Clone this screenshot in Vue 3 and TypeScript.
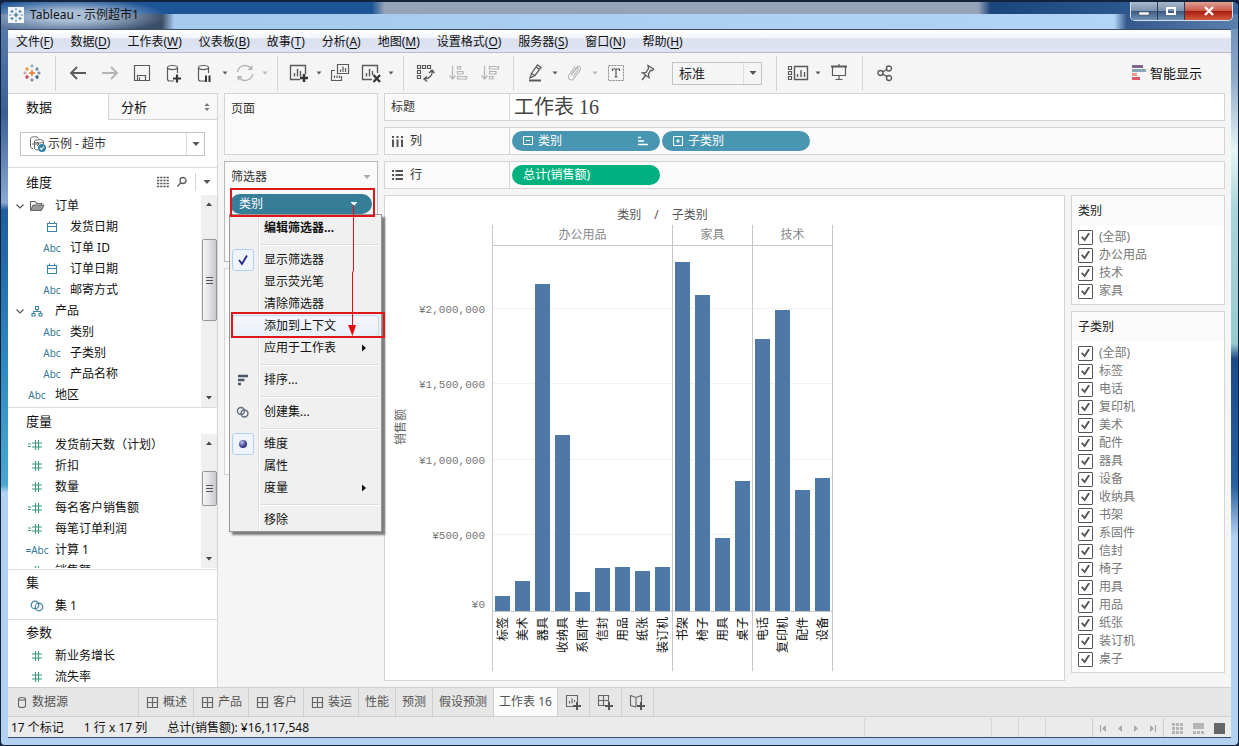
<script setup lang="ts">
import { h, type FunctionalComponent } from 'vue'

interface Shape { d: string; f?: string; s?: string; w?: number; dash?: string }
interface IconDef { w: number; h: number; p: Shape[] }

const G = '#5a5a5a'
const L = '#b4b4b4'
const B = '#3f83a3'
const N = '#3c9b80'
const plus = (x: number, y: number, r: number) => `M${x - r} ${y}H${x + r}M${x} ${y - r}V${y + r}`
const circle = (x: number, y: number, r: number) => `M${x - r} ${y}a${r} ${r} 0 1 0 ${2 * r} 0a${r} ${r} 0 1 0 ${-2 * r} 0Z`
const cylinder = 'M10 18H5.500Q3.500 18 3.500 16V4.500M3.500 4.500C3.500 1.800 13.500 1.800 13.500 4.500C13.500 7.200 3.500 7.200 3.500 4.500M13.500 4.500V10'
const squares = (pts: number[][], s: number) => pts.map(([x, y]) => `M${x} ${y}h${s}v${s}h${-s}Z`).join('')

const icons: Record<string, IconDef> = {
  logo: { w: 18, h: 18, p: [
    { d: plus(9, 9, 3), s: '#e8762d', w: 1.6 },
    { d: plus(4, 5, 2), s: '#eb9129', w: 1.2 }, { d: plus(14, 5, 2), s: '#59879b', w: 1.2 },
    { d: plus(4, 13, 2), s: '#c72037', w: 1.2 }, { d: plus(14, 13, 2), s: '#1f457e', w: 1.2 },
    { d: plus(9, 2, 1.6), s: '#7199a6', w: 1 }, { d: plus(9, 16, 1.6), s: '#5c6692', w: 1 },
    { d: plus(2, 9, 1.6), s: '#c08aa0', w: 1 }, { d: plus(16, 9, 1.6), s: '#5c6692', w: 1 } ] },
  logoBlue: { w: 16, h: 16, p: [
    { d: plus(8, 8, 2.4), s: '#2f6590', w: 1.1 },
    { d: plus(4, 4.5, 1.5) + plus(12, 4.5, 1.5) + plus(4, 11.5, 1.5) + plus(12, 11.5, 1.5), s: '#3b719a', w: 0.9 },
    { d: plus(8, 2.2, 1.1) + plus(8, 13.8, 1.1) + plus(2.2, 8, 1.1) + plus(13.8, 8, 1.1), s: '#6d9aba', w: 0.8 } ] },
  back: { w: 20, h: 20, p: [{ d: 'M18 10H3M9 4L3 10L9 16', s: G, w: 1.8 }] },
  forward: { w: 20, h: 20, p: [{ d: 'M2 10H17M11 4L17 10L11 16', s: L, w: 1.8 }] },
  save: { w: 18, h: 18, p: [{ d: 'M1.500 1.500H16.500V16.500H1.500ZM4.500 16V11.500H12.500V16M6.500 16V13.500', s: G, w: 1.2 }] },
  dbAdd: { w: 20, h: 20, p: [{ d: cylinder, s: G, w: 1.2 }, { d: 'M9 15.500H17M13 11.500V19.500', s: '#333', w: 2.2 }] },
  dbPause: { w: 20, h: 20, p: [{ d: cylinder, s: G, w: 1.2 }, { d: 'M11 12.500V19M14.500 12.500V19', s: '#333', w: 2 }] },
  refresh: { w: 20, h: 20, p: [{ d: 'M2.500 9A7.500 7.500 0 0 1 15.500 5M17.500 11A7.500 7.500 0 0 1 4.500 15', s: L, w: 1.5 }, { d: 'M12.500 7H17.500V2ZM7.500 13H2.500V18Z', f: L }] },
  sheetAdd: { w: 20, h: 20, p: [{ d: 'M11 16.500H1.500V2.500H16.500V11M5.500 13.500V10M8.500 13.500V6M11.500 13.500V8', s: G, w: 1.4 }, { d: 'M11 15H19M15 11V19', s: '#333', w: 2.4 }] },
  duplicate: { w: 20, h: 20, p: [{ d: 'M7.500 1.500H18.500V10.500H7.500ZM10.500 9V6.500M13 9V3.500M15.500 9V5M5 7.500H1.500V17.500H11.500V13M4.500 15V12.500M7 15V12.500M9.500 15V12.500', s: G, w: 1.2 }] },
  sheetClear: { w: 20, h: 20, p: [{ d: 'M11 16.500H1.500V2.500H16.500V10M5.500 13.500V10M8.500 13.500V6M11.500 12V8', s: G, w: 1.4 }, { d: 'M12.500 12L19 19M19 12L12.500 19', s: '#333', w: 2.2 }] },
  swap: { w: 20, h: 20, p: [{ d: squares([[1.5, 2.5], [6.5, 2.5], [11.5, 2.500], [1.5, 7.5], [1.5, 12.5]], 3), s: G, w: 1.2 }, { d: 'M16 7.500C17 12 13 16 8.500 16M13 10L16 7L18.500 10M11 13.500L8 16L11 18.500', s: G, w: 1.4 }] },
  sortAsc: { w: 20, h: 20, p: [{ d: 'M4.500 3V15M1.500 12.500L4.500 16L7.500 12.500M9.500 3.500H12.500V6H9.500ZM9.500 8.500H15V11H9.500ZM9.500 13.500H18.500V16H9.500Z', s: L, w: 1.2 }] },
  sortDesc: { w: 20, h: 20, p: [{ d: 'M4.500 3V15M1.500 12.500L4.500 16L7.500 12.500M9.500 3.500H18.500V6H9.500ZM9.500 8.500H16V11H9.500ZM9.500 13.500H13V16H9.500Z', s: L, w: 1.2 }] },
  pen: { w: 20, h: 20, p: [{ d: 'M5 15L6.500 10.500L12.500 2L16 4.500L10 12.500ZM6.500 10.500L10 12.500M11 4L14.500 6.500', s: G, w: 1.3 }, { d: 'M4 17.500H16', s: G, w: 2 }] },
  clip: { w: 20, h: 20, p: [{ d: 'M6 12L11.500 4.500C13.500 2 17 4.500 15 7.500L9 15.500C6.500 19 1.500 15.500 4 12L10 3.500M8 14L13 7C14 5 12 4.500 11 6L7 11.500', s: L, w: 1.1 }] },
  text: { w: 20, h: 20, p: [{ d: 'M2.500 2.500H17.500V17.500H2.500Z', s: '#888', w: 1, dash: '2 1' }, { d: 'M6.500 8V6H13.500V8M10 6V14M8.500 14H11.500', s: '#555', w: 1.2 }] },
  pin: { w: 20, h: 20, p: [{ d: 'M10 2.500L15.500 6L14 7.500L12.500 7.500L10.500 11L11 14.500L4.500 10L8 9.500L10.500 5.500ZM7.500 12.500L4 17', s: G, w: 1.3 }] },
  cards: { w: 22, h: 18, p: [{ d: squares([[1.5, 2.5], [1.5, 7.500], [1.5, 12.5]], 3), s: G, w: 1.2 }, { d: 'M7.500 2.500H20.500V15.500H7.500ZM10.500 13V10M14 13V6M17.500 13V8', s: G, w: 1.4 }] },
  present: { w: 20, h: 20, p: [{ d: 'M2 3.500H18', s: G, w: 2 }, { d: 'M3.500 4V12.500H16.500V4M10 1V3M10 12.500V16.500M6.500 16.500H13.500', s: G, w: 1.2 }] },
  share: { w: 18, h: 18, p: [{ d: circle(4.500, 9, 2.500) + circle(13, 4.500, 2.500) + circle(13, 14, 2.500) + 'M7 8L10.500 5.500M7 10L10.500 12.500', s: G, w: 1.4 }] },
  showMe: { w: 16, h: 16, p: [{ d: 'M1 0H12V3H1Z', f: '#7d6690' }, { d: 'M1 4H15V7H1Z', f: '#86a5bb' }, { d: 'M1 8H6V11H1Z', f: '#f29c86' }, { d: 'M1 12H9V15H1Z', f: '#e15767' }] },
  caret: { w: 8, h: 8, p: [{ d: 'M1.500 2.500H6.500L4 5.500Z', f: '#5a5a5a' }] },
  caretLight: { w: 8, h: 8, p: [{ d: 'M1.500 2.500H6.500L4 5.500Z', f: '#b4b4b4' }] },
  caretBig: { w: 10, h: 8, p: [{ d: 'M1.500 2H8.500L5 6Z', f: '#555' }] },
  caretGray: { w: 10, h: 8, p: [{ d: 'M1.500 2H8.500L5 6Z', f: '#aaa' }] },
  caretWhite: { w: 10, h: 8, p: [{ d: 'M1.500 2H8.500L5 6Z', f: '#fff' }] },
  updown: { w: 8, h: 10, p: [{ d: 'M1.500 4H6.500L4 1ZM1.500 6H6.500L4 9Z', f: '#777' }] },
  source: { w: 18, h: 18, p: [{ d: 'M4 13.500C2 13.500 1.500 12.500 1.500 11.500V4M1.500 4C1.500 1 9.500 1 9.500 3.500M5.500 13V6.500M5.500 6.500C5.500 4 14.500 4 14.500 6.500C14.500 8.500 5.500 8.500 5.500 6.500M14.500 6.500V9M5.500 13C5.500 14.500 7 15 9 15M3 9H10M8 7L10 9L8 11', s: '#666', w: 1 }, { d: circle(13, 13, 4), f: '#3580a5' }, { d: 'M11 13L12.500 14.500L15 11.500', s: '#fff', w: 1.1 }] },
  list: { w: 14, h: 12, p: [{ d: 'M1 1.500H13M1 4.500H13M1 7.500H13M1 10.500H13', s: '#555', w: 1.3, dash: '2.200 1' }] },
  search: { w: 12, h: 12, p: [{ d: circle(7, 4.500, 3) + 'M4.500 7L1.500 10.500', s: G, w: 1.3 }] },
  chevron: { w: 10, h: 10, p: [{ d: 'M1.500 3.500L5 7L8.500 3.500', s: '#555', w: 1.2 }] },
  folder: { w: 16, h: 14, p: [{ d: 'M1.500 11.500V2.500H6L7.500 4.500H12.500V6', s: '#666', w: 1.1 }, { d: 'M1.500 11.500L4 6H15L12.500 11.500Z', f: '#999', s: '#666', w: 1 }] },
  date: { w: 12, h: 12, p: [{ d: 'M1.500 2.500H10.500V10.500H1.500ZM1.500 5.500H10.500M3.500 0.500V3M8.500 0.500V3', s: B, w: 1.1 }] },
  tree: { w: 12, h: 12, p: [{ d: 'M4.500 1.500H7.500V4.500H4.500ZM6 4.500V6.500M2.500 8.500V6.500H9.500V8.500M1 8.500H4V11H1ZM8 8.500H11V11H8Z', s: B, w: 1.1 }] },
  num: { w: 20, h: 12, p: [{ d: 'M5 4H15M5 8H15M8.500 1V11M11.500 1V11', s: N, w: 1.1 }] },
  numCalc: { w: 20, h: 12, p: [{ d: 'M5 4H15M5 8H15M8.500 1V11M11.500 1V11M1 5H4M1 7.500H4', s: N, w: 1.1 }] },
  set: { w: 14, h: 12, p: [{ d: circle(5, 5, 3.800) + circle(9, 7, 3.800), s: B, w: 1.2 }] },
  setGray: { w: 14, h: 12, p: [{ d: circle(5, 5, 3.500) + circle(8.500, 7.500, 3.500), s: '#627080', w: 1.4 }] },
  columns: { w: 13, h: 13, p: [{ d: 'M2 1V3M6.500 1V3M11 1V3M2 4.500V12M6.500 4.500V12M11 4.500V12', s: '#555', w: 2 }] },
  rows: { w: 13, h: 13, p: [{ d: 'M1 2H3M1 6H3M1 10H3M4.500 2H12M4.500 6H12M4.500 10H12', s: '#555', w: 2 }] },
  minus: { w: 10, h: 10, p: [{ d: 'M0.500 0.500H9.500V8.500H0.500ZM3 4.500H7', s: '#fff', w: 1 }] },
  plusBox: { w: 10, h: 10, p: [{ d: 'M0.500 0.500H9.500V9.500H0.500ZM3 5H7M5 3V7', s: '#fff', w: 1 }] },
  sorted: { w: 12, h: 12, p: [{ d: 'M1 2.500H4M1 6H7M1 9.500H11', s: '#fff', w: 1.6 }] },
  check: { w: 12, h: 14, p: [{ d: 'M2 7L5 11L10 2.500', s: '#20208a', w: 1.8 }] },
  sort: { w: 12, h: 12, p: [{ d: 'M1 2H11M1 6H7.500M1 10H4', s: '#4a5568', w: 2.4 }] },
  right: { w: 8, h: 10, p: [{ d: 'M2 1.500V8.500L6 5Z', f: '#111' }] },
  db: { w: 10, h: 13, p: [{ d: 'M1.500 3C1.500 1 8.500 1 8.500 3V10C8.500 12 1.500 12 1.500 10ZM1.500 3C1.500 4.500 8.500 4.500 8.500 3', s: '#666', w: 1.1 }] },
  dash: { w: 13, h: 13, p: [{ d: 'M1.500 1.500H11.500V11.500H1.500ZM6.500 1.500V11.500M1.500 6.500H11.500', s: '#666', w: 1.2 }] },
  newSheet: { w: 16, h: 16, p: [{ d: 'M8 12.500H1.500V1.500H12.500V8M4.500 9.500V7M7 9.500V4.500M9.500 8V6', s: '#666', w: 1.1 }, { d: 'M8 12H16M12 8V16', s: '#555', w: 2 }] },
  newDash: { w: 16, h: 16, p: [{ d: 'M8 11.500H1.500V1.500H11.500V8M6.500 1.500V11.500M1.500 6.500H11.500', s: '#666', w: 1.1 }, { d: 'M8 12H16M12 8V16', s: '#555', w: 2 }] },
  newStory: { w: 16, h: 16, p: [{ d: 'M7 13L1.500 11.500V1.500L7 3.500L12.500 1.500V8M7 3.500V13', s: '#666', w: 1.1 }, { d: 'M8 12H16M12 8V16', s: '#555', w: 2 }] },
  first: { w: 10, h: 10, p: [{ d: 'M1.500 2V9', s: '#aaa', w: 1.2 }, { d: 'M7 2V9L3 5.500Z', f: '#aaa' }] },
  prev: { w: 10, h: 10, p: [{ d: 'M7 2V9L3 5.500Z', f: '#aaa' }] },
  next: { w: 10, h: 10, p: [{ d: 'M3 2V9L7 5.500Z', f: '#aaa' }] },
  last: { w: 10, h: 10, p: [{ d: 'M3 2V9L7 5.500Z', f: '#aaa' }, { d: 'M8.500 2V9', s: '#aaa', w: 1.2 }] },
  tiles: { w: 12, h: 12, p: [{ d: squares([[0, 1], [4, 1], [8, 1], [0, 5], [4, 5], [8, 5], [0, 9], [4, 9], [8, 9]], 3), f: '#b5b5b5' }] },
  film: { w: 12, h: 12, p: [{ d: 'M0 1H11V7H0Z' + squares([[0, 9], [4, 9], [8, 9]], 3), f: '#b5b5b5' }] },
  single: { w: 12, h: 12, p: [{ d: 'M0 1H11V12H0Z', f: '#666' }] },
  winMin: { w: 12, h: 10, p: [{ d: 'M1 6H11V9H1Z', f: '#fff', s: '#445', w: 0.5 }] },
  winMax: { w: 12, h: 10, p: [{ d: 'M2 2H10V8H2Z', s: '#fff', w: 2 }] },
  winClose: { w: 12, h: 10, p: [{ d: 'M2 1L10 9M10 1L2 9', s: '#fff', w: 2.4 }] },
  arrowUp: { w: 8, h: 6, p: [{ d: 'M1 5H7L4 1.500Z', f: '#444' }] },
  arrowDown: { w: 8, h: 6, p: [{ d: 'M1 1H7L4 4.500Z', f: '#444' }] },
}

const Icon: FunctionalComponent<{ name: string }> = (props) => {
  const i = icons[props.name]
  return h('svg', { class: 'icon', width: i.w, height: i.h, viewBox: `0 0 ${i.w} ${i.h}`, 'aria-hidden': 'true' },
    i.p.map((s) => h('path', { d: s.d, fill: s.f ?? 'none', stroke: s.s ?? 'none', 'stroke-width': s.w ?? 0, 'stroke-dasharray': s.dash })))
}
Icon.props = ['name']

const menus = [['文件', 'F'], ['数据', 'D'], ['工作表', 'W'], ['仪表板', 'B'], ['故事', 'T'], ['分析', 'A'], ['地图', 'M'], ['设置格式', 'O'], ['服务器', 'S'], ['窗口', 'N'], ['帮助', 'H']]

interface Tool { icon: string; label: string; caret?: string }
const toolGroups: Tool[][] = [
  [{ icon: 'back', label: '撤消' }, { icon: 'forward', label: '重做' }, { icon: 'save', label: '保存' }, { icon: 'dbAdd', label: '新建数据源' }, { icon: 'dbPause', label: '暂停自动更新', caret: 'caret' }, { icon: 'refresh', label: '运行更新', caret: 'caretLight' }],
  [{ icon: 'sheetAdd', label: '新建工作表', caret: 'caret' }, { icon: 'duplicate', label: '复制' }, { icon: 'sheetClear', label: '清除工作表', caret: 'caret' }],
  [{ icon: 'swap', label: '交换行和列' }, { icon: 'sortAsc', label: '升序排序' }, { icon: 'sortDesc', label: '降序排序' }],
  [{ icon: 'pen', label: '突出显示', caret: 'caret' }, { icon: 'clip', label: '组成员', caret: 'caretLight' }, { icon: 'text', label: '显示标记标签' }, { icon: 'pin', label: '固定轴' }],
]
const viewTools: Tool[] = [{ icon: 'cards', label: '显示/隐藏功能区', caret: 'caret' }, { icon: 'present', label: '演示模式' }]

interface Field { name: string; icon?: string; abc?: string; kind?: string }
const dimensions: Field[] = [
  { name: '订单', icon: 'folder', kind: 'parent' }, { name: '发货日期', icon: 'date', kind: 'child' }, { name: '订单 ID', abc: 'Abc', kind: 'child' },
  { name: '订单日期', icon: 'date', kind: 'child' }, { name: '邮寄方式', abc: 'Abc', kind: 'child' }, { name: '产品', icon: 'tree', kind: 'parent' },
  { name: '类别', abc: 'Abc', kind: 'child' }, { name: '子类别', abc: 'Abc', kind: 'child' }, { name: '产品名称', abc: 'Abc', kind: 'child' }, { name: '地区', abc: 'Abc' },
]
const measures: Field[] = [
  { name: '发货前天数（计划）', icon: 'numCalc' }, { name: '折扣', icon: 'num' }, { name: '数量', icon: 'num' }, { name: '每名客户销售额', icon: 'numCalc' },
  { name: '每笔订单利润', icon: 'numCalc' }, { name: '计算 1', abc: '=Abc' }, { name: '销售额', icon: 'num' },
]

interface Entry { label?: string; icon?: string; bold?: boolean; boxed?: boolean; sub?: boolean; hot?: boolean; dot?: boolean }
const entries: Entry[] = [
  { label: '编辑筛选器...', bold: true }, {}, { label: '显示筛选器', icon: 'check', boxed: true }, { label: '显示荧光笔' }, { label: '清除筛选器' },
  { label: '添加到上下文', hot: true }, { label: '应用于工作表', sub: true }, {}, { label: '排序...', icon: 'sort' }, {}, { label: '创建集...', icon: 'setGray' }, {},
  { label: '维度', dot: true, boxed: true }, { label: '属性' }, { label: '度量', sub: true }, {}, { label: '移除' },
]

const axisMax = 2414000
const ticks = [0, 500000, 1000000, 1500000, 2000000]
const panes = [
  { name: '办公用品', bars: [['标签', 99000], ['美术', 198000], ['器具', 2163000], ['收纳具', 1164000], ['系固件', 126000], ['信封', 284000], ['用品', 291000], ['纸张', 265000], ['装订机', 291000]] },
  { name: '家具', bars: [['书架', 2308000], ['椅子', 2090000], ['用具', 483000], ['桌子', 860000]] },
  { name: '技术', bars: [['电话', 1799000], ['复印机', 1991000], ['配件', 800000], ['设备', 880000]] },
] as { name: string; bars: [string, number][] }[]
const pct = (v: number) => `${(v / axisMax) * 100}%`

const quickFilters = [
  { title: '类别', items: ['(全部)', '办公用品', '技术', '家具'] },
  { title: '子类别', items: ['(全部)', '标签', '电话', '复印机', '美术', '配件', '器具', '设备', '收纳具', '书架', '系固件', '信封', '椅子', '用具', '用品', '纸张', '装订机', '桌子'] },
]

const tabs = [
  { name: '概述', icon: true }, { name: '产品', icon: true }, { name: '客户', icon: true }, { name: '装运', icon: true },
  { name: '性能' }, { name: '预测' }, { name: '假设预测' }, { name: '工作表 16', active: true },
] as { name: string; icon?: boolean; active?: boolean }[]
const newTabs = [['newSheet', '新建工作表'], ['newDash', '新建仪表板'], ['newStory', '新建故事']]
</script>

<template>
  <div class="window">
    <header class="titlebar">
      <span class="app-icon"><Icon name="logoBlue" /></span>
      <span class="title">Tableau - 示例超市1</span>
      <div class="win-buttons">
        <button aria-label="最小化"><Icon name="winMin" /></button>
        <button aria-label="最大化"><Icon name="winMax" /></button>
        <button class="close" aria-label="关闭"><Icon name="winClose" /></button>
      </div>
    </header>

    <div class="client">
      <nav class="menubar">
        <button v-for="m in menus" :key="m[1]">{{ m[0] }}(<u>{{ m[1] }}</u>)</button>
      </nav>

      <div class="toolbar">
        <button class="home" aria-label="开始"><Icon name="logo" /></button>
        <template v-for="(g, gi) in toolGroups" :key="gi">
          <i class="sep"></i>
          <template v-for="t in g" :key="t.icon">
            <button class="tool" :class="{ split: t.caret }" :aria-label="t.label"><Icon :name="t.icon" /></button>
            <button v-if="t.caret" class="drop" :aria-label="t.label + '选项'"><Icon :name="t.caret" /></button>
          </template>
        </template>
        <div class="fit">
          <select aria-label="适合"><option>标准</option></select>
          <span><Icon name="caretBig" /></span>
        </div>
        <i class="sep wide"></i>
        <template v-for="t in viewTools" :key="t.icon">
          <button class="tool" :class="{ split: t.caret }" :aria-label="t.label"><Icon :name="t.icon" /></button>
          <button v-if="t.caret" class="drop" :aria-label="t.label + '选项'"><Icon :name="t.caret" /></button>
        </template>
        <i class="sep"></i>
        <button class="tool" aria-label="共享"><Icon name="share" /></button>
        <button class="show-me"><Icon name="showMe" />智能显示</button>
      </div>

      <div class="workspace">
        <aside class="data-pane">
          <div class="pane-tabs">
            <button class="on">数据</button>
            <button>分析<Icon name="updown" /></button>
          </div>
          <div class="source">
            <Icon name="source" />
            <select aria-label="数据源"><option>示例 - 超市</option></select>
            <span><Icon name="caretBig" /></span>
          </div>
          <section class="dims">
            <div class="section-head">
              <h2>维度</h2>
              <button aria-label="查看数据"><Icon name="list" /></button>
              <button aria-label="查找"><Icon name="search" /></button>
              <button class="more" aria-label="维度菜单"><Icon name="caretBig" /></button>
            </div>
            <div class="scroll-area">
              <ul>
                <li v-for="f in dimensions" :key="f.name" :class="f.kind">
                  <span v-if="f.kind === 'parent'" class="chev"><Icon name="chevron" /></span>
                  <span class="type"><Icon v-if="f.icon" :name="f.icon" /><template v-else>{{ f.abc }}</template></span>{{ f.name }}
                </li>
              </ul>
              <div class="bar-track"><Icon name="arrowUp" /><div class="thumb tall"></div><i></i><Icon name="arrowDown" /></div>
            </div>
          </section>
          <section class="meas">
            <h2>度量</h2>
            <div class="scroll-area">
              <ul>
                <li v-for="f in measures" :key="f.name">
                  <span class="type"><Icon v-if="f.icon" :name="f.icon" /><template v-else>{{ f.abc }}</template></span>{{ f.name }}
                </li>
              </ul>
              <div class="bar-track"><Icon name="arrowUp" /><div class="thumb"></div><i></i><Icon name="arrowDown" /></div>
            </div>
          </section>
          <section class="sets">
            <h2>集</h2>
            <ul><li><span class="type"><Icon name="set" /></span>集 1</li></ul>
          </section>
          <section class="params">
            <h2>参数</h2>
            <ul>
              <li><span class="type"><Icon name="num" /></span>新业务增长</li>
              <li><span class="type"><Icon name="num" /></span>流失率</li>
            </ul>
          </section>
        </aside>

        <div class="cards">
          <section class="card pages"><h3>页面</h3></section>
          <section class="card filters">
            <h3>筛选器<Icon name="caretGray" /></h3>
            <button class="filter-pill">类别<Icon name="caretWhite" /></button>
            <div class="popup" role="menu">
              <template v-for="(e, i) in entries" :key="i">
                <button v-if="e.label" role="menuitem" class="entry" :class="{ bold: e.bold, hot: e.hot }">
                  <span class="gutter" :class="{ boxed: e.boxed }"><Icon v-if="e.icon" :name="e.icon" /><i v-if="e.dot" class="dot"></i></span>
                  <span class="entry-label">{{ e.label }}</span>
                  <Icon v-if="e.sub" name="right" />
                </button>
                <div v-else class="rule" role="separator"></div>
              </template>
            </div>
            <div class="callout"></div>
            <svg class="pointer" width="12" height="132" viewBox="0 0 12 132" aria-hidden="true">
              <path d="M7.500 0V66L6.500 67V122" fill="none" stroke="#e01015" />
              <path d="M2 120H10L6.500 131Z" fill="#e60a10" />
            </svg>
          </section>
          <section class="card marks"></section>
        </div>

        <main class="sheet">
          <div class="shelf title-shelf"><div class="shelf-name">标题</div><h1>工作表 16</h1></div>
          <div class="shelf">
            <div class="shelf-name"><Icon name="columns" />列</div>
            <div class="pills">
              <button class="pill"><Icon name="minus" /><span>类别</span><Icon name="sorted" /></button>
              <button class="pill"><Icon name="plusBox" /><span>子类别</span></button>
            </div>
          </div>
          <div class="shelf">
            <div class="shelf-name"><Icon name="rows" />行</div>
            <div class="pills"><button class="pill green"><span>总计(销售额)</span></button></div>
          </div>
          <div class="view">
            <div class="viz">
              <div class="chart">
                <div class="chart-title"><span>类别</span><span>/</span><span>子类别</span></div>
                <div class="y-title"><span>销售额</span></div>
                <div class="y-axis">
                  <span v-for="t in ticks" :key="t" :class="{ zero: t === 0 }" :style="{ bottom: pct(t) }">¥{{ t.toLocaleString('en-US') }}</span>
                </div>
                <div class="panes">
                  <div v-for="p in panes" :key="p.name" class="pane">
                    <div class="pane-head">{{ p.name }}</div>
                    <div class="plot">
                      <i v-for="t in ticks.slice(1)" :key="t" class="grid-line" :style="{ bottom: pct(t) }"></i>
                      <div v-for="b in p.bars" :key="b[0]" class="slot"><div class="bar" :style="{ height: pct(b[1]) }"></div></div>
                    </div>
                    <div class="x-labels"><div v-for="b in p.bars" :key="b[0]"><span>{{ b[0] }}</span></div></div>
                  </div>
                </div>
              </div>
            </div>
            <div class="quick">
              <fieldset v-for="q in quickFilters" :key="q.title">
                <h3>{{ q.title }}</h3>
                <label v-for="n in q.items" :key="n"><input type="checkbox" checked />{{ n }}</label>
              </fieldset>
            </div>
          </div>
        </main>
      </div>

      <nav class="sheet-tabs">
        <button class="ds-tab"><Icon name="db" />数据源</button>
        <button v-for="t in tabs" :key="t.name" :class="{ active: t.active, dash: t.icon }"><Icon v-if="t.icon" name="dash" />{{ t.name }}</button>
        <button v-for="n in newTabs" :key="n[0]" class="new" :aria-label="n[1]"><Icon :name="n[0]" /></button>
      </nav>

      <footer class="status">
        <span>17 个标记</span><span>1 行 x 17 列</span><span>总计(销售额): ¥16,117,548</span>
        <div class="status-cells"><i class="first-cell"></i><i></i><i></i><i></i></div>
        <div class="nav-icons">
          <button aria-label="第一个"><Icon name="first" /></button><button aria-label="上一个"><Icon name="prev" /></button>
          <button aria-label="下一个"><Icon name="next" /></button><button aria-label="最后一个"><Icon name="last" /></button>
        </div>
        <div class="view-icons">
          <button aria-label="工作表排序程序"><Icon name="tiles" /></button><button aria-label="缩略图"><Icon name="film" /></button><button aria-label="标签"><Icon name="single" /></button>
        </div>
      </footer>
    </div>
  </div>
</template>

<style>
body { margin: 0; background: #10233f; }
</style>

<style scoped>
*, *::after { box-sizing: border-box; }
button, select, input { font: inherit; color: inherit; margin: 0; }
button { background: none; border: 0; padding: 0; display: flex; align-items: center; justify-content: center; white-space: nowrap; }
ul, h1, h2, h3 { margin: 0; padding: 0; list-style: none; font-weight: 400; }
h3 { font-size: 12px; }
.icon { display: block; flex: none; }
i { font-style: normal; }
select { appearance: none; outline: 0; }

.window {
  height: 100vh; min-height: 700px; display: flex; flex-direction: column; padding: 0 7px 7px; overflow: hidden;
  font: 12px/16px "Noto Sans", "Noto Sans CJK SC", sans-serif; color: #222;
  border: 1px solid #14233c; border-top-width: 2px; border-radius: 7px 7px 5px 5px;
  background:
    linear-gradient(#5f82b1 0, #3b5f95 15%, #8aa9d3 27%, #1f5c9d 28%, #2f8cc0 50%, #48a8d2 65%, #b3d2f3 66%) left / 7px 100% no-repeat,
    linear-gradient(#6186b4 0, #8da9ca 10%, #e7f5f5 20%, #a8d6da 28%, #97cbd0 46%, #1d4b88 48%, #285f9e 65%, #b3d2f3 72%) right / 7px 100% no-repeat,
    #b3d2f3;
}
.titlebar {
  height: 27px; flex: none; display: flex; align-items: center; margin: 0 -7px; padding: 0 0 2px 7px; color: #111;
  background:
    radial-gradient(ellipse 95px 18px at 70px 14px, #a9bdd5 30%, transparent),
    linear-gradient(90deg, #1d5496 30%, #94a3b8 31%, #94a3b8 79%, #1b457f 80%, #3a649a) top / 100% 12px no-repeat,
    linear-gradient(90deg, #56729a 0, #3a4d66 13%, #a5c9ee 14%, #b2d4f6 90%, #33598d 91%, #5a80ae);
}
.app-icon { width: 16px; height: 16px; background: #f1f5fa; }
.title { margin-left: 6px; }
.win-buttons { display: flex; margin-left: auto; margin-right: 5px; align-self: flex-start; height: 19px; border: 1px solid #d5e1ee; border-top: 0; border-radius: 0 0 5px 5px; overflow: hidden; }
.win-buttons button { width: 27px; background: linear-gradient(#a9b9cc, #7c92ad 48%, #3b587c 50%, #6f92b7); border-right: 1px solid #293d58; }
.win-buttons .close { width: 47px; border: 0; background: linear-gradient(#dfa195, #c95a49 48%, #a91c10 50%, #d15a3d); }

.client { flex: 1; min-height: 0; display: flex; flex-direction: column; background: #f5f5f5; border: 1px solid #3b4d68; border-width: 1px 0; }
.menubar { height: 23px; flex: none; display: flex; align-items: center; gap: 17px; padding: 2px 0 0 8px; color: #111; background: linear-gradient(#fff 0, #f4f6fb 35%, #dce1f0 40%, #dfe4f2 100%); border-bottom: 1px solid #b7bccb; }
.menubar u { text-underline-offset: 2px; }

.toolbar { height: 40px; flex: none; display: flex; align-items: center; }
.home { width: 47px; }
.sep { width: 1px; height: 35px; background: #d4d4d4; margin: 0 6px 0 7px; }
.home + .sep { margin-left: 0; }
.sep.wide { margin-left: 14px; }
.tool { width: 32px; height: 30px; }
.tool.split { width: 30px; }
.drop { width: 10px; height: 30px; }
.fit { margin-left: 8px; width: 90px; height: 23px; border: 1px solid #c4c4c4; display: flex; }
.fit select { flex: 1; min-width: 0; border: 0; background: none; padding: 0 6px; font-size: 13px; line-height: 20px; }
.fit span, .source span { width: 18px; display: flex; align-items: center; justify-content: center; border-left: 1px solid #ddd; }
.show-me { margin-left: auto; margin-right: 29px; gap: 3px; font-size: 13px; color: #111; }

.workspace { flex: 1; min-height: 0; display: flex; }
.data-pane { width: 210px; flex: none; background: #fff; border: 1px solid #d4d4d4; border-width: 1px 1px 0 0; display: flex; flex-direction: column; color: #111; overflow: hidden; }
.pane-tabs { display: flex; height: 26px; flex: none; }
.pane-tabs button { width: 100px; padding-left: 18px; font-size: 13px; justify-content: flex-start; }
.pane-tabs button + button { flex: 1; padding: 0 6px 0 12px; justify-content: space-between; background: #f8f8f8; border: 1px solid #d4d4d4; border-width: 0 0 1px 1px; }
.source { height: 24px; flex: none; margin: 12px 12px 11px; border: 1px solid #c4c4c4; display: flex; align-items: stretch; padding-left: 8px; color: #333; }
.source > .icon { align-self: center; }
.source select { flex: 1; min-width: 0; border: 0; background: none; padding: 0 1px; }
section h2 { font-size: 13px; line-height: 26px; padding-left: 18px; }
.data-pane > section { border-top: 1px solid #dcdcdc; flex: none; }
.section-head { display: flex; align-items: center; height: 27px; padding-right: 5px; }
.section-head h2 { flex: 1; }
.section-head button { width: 19px; height: 18px; }
.section-head .more { width: 17px; border-left: 1px solid #d4d4d4; margin-left: 4px; justify-content: flex-end; }
.data-pane .dims { flex: 1; min-height: 0; display: flex; flex-direction: column; }
.scroll-area { display: flex; overflow: hidden; }
.dims .scroll-area { flex: 1; min-height: 0; }
.meas .scroll-area { height: 134px; margin-bottom: 1px; }
.scroll-area ul { flex: 1; }
li { display: flex; align-items: center; height: 21px; padding-left: 19px; white-space: nowrap; }
li.parent { padding-left: 5px; }
li.child { padding-left: 34px; }
.chev { width: 14px; display: flex; justify-content: center; }
.type { width: 20px; margin-right: 8px; display: flex; justify-content: center; font-size: 10px; color: #35789a; }
.bar-track { width: 16px; background: #efefef; display: flex; flex-direction: column; align-items: center; padding: 6px 0; }
.thumb { width: 15px; height: 35px; margin-top: 25px; flex: none; border: 1px solid #979797; border-radius: 2px; background: linear-gradient(#555, #555) center 13px / 7px 1px no-repeat, linear-gradient(#555, #555) center 16px / 7px 1px no-repeat, linear-gradient(#555, #555) center 19px / 7px 1px no-repeat, linear-gradient(90deg, #f6f6f6, #e2e2e5 50%, #c8c8ce); }
.thumb.tall { height: 82px; margin-top: 32px; background-position: center 37px, center 40px, center 43px, center; }
.bar-track i { flex: 1; }
.sets { height: 50px; }
.sets h2, .params h2 { line-height: 25px; }
.params { height: 68px; }

.cards { width: 154px; flex: none; margin-left: 6px; display: flex; flex-direction: column; gap: 6px; }
.card { background: #fafafa; border: 1px solid #d4d4d4; }
.card h3 { display: flex; align-items: center; justify-content: space-between; height: 29px; padding: 0 5px 0 6px; color: #333; }
.pages { height: 62px; }
.filters { height: 101px; border-color: #b8b8b8; position: relative; z-index: 2; }
.marks { height: 207px; }
.filter-pill { width: 142px; height: 20px; margin: 3px 5px 0; border-radius: 10px; background: #367d97; color: #fff; padding: 0 13px 0 9px; justify-content: space-between; }
.callout { position: absolute; left: 5px; top: 26px; width: 145px; height: 29px; border: 2px solid #e0161b; }
.pointer { position: absolute; left: 121px; top: 43px; }
.popup { position: absolute; left: 4px; top: 52px; width: 153px; padding: 2px 2px 0; border: 1px solid #979797; background: linear-gradient(90deg, #f0f0f0 28px, #dedede 28px, #dedede 29px, #fff 29px, #fff 30px, #f0f0f0 30px); box-shadow: 3px 3px 2px rgba(0, 0, 0, .5); color: #111; }
.entry { width: 100%; height: 22px; justify-content: flex-start; position: relative; padding-right: 11px; }
.gutter { width: 22px; height: 22px; margin-right: 10px; display: flex; align-items: center; justify-content: center; }
.gutter.boxed { border: 1px solid #aecff7; border-radius: 3px; background: #f0f5fc; }
.entry-label { flex: 1; text-align: left; }
.bold { font-weight: 700; }
.hot { background: linear-gradient(#f4f7fb, #e8eff8); border: 1px solid #c4d8f0; border-radius: 3px; }
.hot .gutter { margin-right: 9px; }
.hot::after { content: ""; position: absolute; left: -2px; top: -4px; width: 154px; height: 26px; border: 2px solid #e0161b; }
.rule { height: 10px; margin-left: 28px; background: linear-gradient(#dedede, #dedede) 0 5px / 100% 1px no-repeat, linear-gradient(#fff, #fff) 0 6px / 100% 1px no-repeat; }
.dot { width: 8px; height: 8px; border-radius: 50%; background: radial-gradient(circle at 35% 30%, #c6c6f0, #4a4a9c 50%, #1f1f5c); }

.sheet { flex: 1; min-width: 0; margin: 0 6px 6px; display: flex; flex-direction: column; gap: 6px; }
.shelf { height: 28px; flex: none; display: flex; border: 1px solid #d4d4d4; background: #fafafa; }
.shelf-name { width: 125px; flex: none; border-right: 1px solid #d4d4d4; display: flex; align-items: center; gap: 6px; padding-left: 6px; color: #333; }
.title-shelf h1 { flex: 1; background: #fff; padding-left: 4px; font: 20px/26px "Liberation Serif", "Noto Sans CJK SC", serif; color: #444; }
.pills { display: flex; align-items: center; gap: 2px; padding-left: 2px; }
.pill { width: 148px; height: 20px; border-radius: 10px; background: #4996b2; color: #fff; gap: 5px; padding: 0 11px; justify-content: flex-start; }
.pill span { flex: 1; text-align: left; }
.pill.green { background: #00b180; }
.view { flex: 1; min-height: 0; display: flex; gap: 6px; }
.viz { flex: 1; min-width: 0; background: #fff; border: 1px solid #d4d4d4; padding-bottom: 9px; overflow: hidden; }
.chart { height: 100%; display: grid; grid-template-columns: 24px 83px auto; grid-template-rows: 29px minmax(0, 1fr); justify-content: start; color: #666; }
.chart-title { grid-column: 3; display: flex; justify-content: center; gap: 13px; line-height: 20px; padding-top: 9px; color: #555; }
.y-title { grid-row: 2; grid-column: 1; display: flex; align-items: center; justify-content: flex-end; padding-bottom: 42px; }
.y-title span, .x-labels span { writing-mode: vertical-rl; text-orientation: sideways; transform: rotate(180deg); }
.y-axis { grid-row: 2; grid-column: 2; position: relative; margin: 21px 7px 60px 0; font: 11px/14px "Liberation Mono", monospace; color: #777; }
.y-axis span { position: absolute; right: 0; margin-bottom: -8px; }
.y-axis .zero { margin-bottom: -1px; }
.panes { grid-row: 2; grid-column: 3; display: flex; border-right: 1px solid #c8c8c8; }
.pane { display: flex; flex-direction: column; border-left: 1px solid #c8c8c8; }
.pane-head { height: 21px; line-height: 20px; text-align: center; border-bottom: 1px solid #c8c8c8; color: #888; }
.plot { flex: 1; min-height: 0; display: flex; position: relative; }
.slot { width: 20px; padding-left: 2px; display: flex; align-items: flex-end; position: relative; }
.slot:last-of-type { width: 19px; }
.bar { width: 15px; background: #4e79a7; }
.grid-line { position: absolute; left: 0; right: 0; height: 1px; background: #f1f1f1; }
.x-labels { height: 60px; border-top: 1px solid #c8c8c8; display: flex; padding-top: 5px; color: #111; }
.x-labels div { width: 20px; display: flex; align-items: flex-start; justify-content: center; }
.x-labels div:last-child { width: 19px; }
.quick { width: 154px; flex: none; display: flex; flex-direction: column; gap: 6px; }
fieldset { margin: 0; min-width: 0; padding: 0 0 4px; border: 1px solid #d4d4d4; background: #fff; }
fieldset h3 { height: 29px; line-height: 29px; padding-left: 6px; margin-bottom: 3px; background: #fafafa; color: #222; }
label { display: flex; align-items: center; height: 18px; padding-left: 6px; gap: 6px; color: #777; }
input { appearance: none; width: 15px; height: 15px; border: 1px solid #555; border-radius: 1px; background: #fff; display: flex; align-items: center; justify-content: center; }
input:checked::after { content: ""; width: 9px; height: 9px; background: #555; clip-path: polygon(0 55%, 16% 42%, 38% 66%, 82% 0, 100% 12%, 42% 100%); }

.sheet-tabs { height: 30px; flex: none; display: flex; background: #e6e6e6; border: 1px solid #cfcfcf; border-width: 1px 0; color: #555; }
.sheet-tabs button { border-right: 1px solid #cfcfcf; padding: 0 6px; }
.sheet-tabs .dash { padding: 0 6px 0 7px; gap: 4px; }
.sheet-tabs .ds-tab { width: 131px; justify-content: flex-start; gap: 5px; padding-left: 9px; }
.sheet-tabs .active { background: #fbfbfb; padding: 0 5px; }
.sheet-tabs .new { width: 32px; }
.status { height: 20px; flex: none; display: flex; align-items: center; gap: 20px; padding: 1px 0 0 3px; background: #ebebeb; color: #111; white-space: nowrap; }
.status-cells { margin-left: auto; display: flex; align-self: stretch; }
.status-cells i { width: 27px; border-left: 1px solid #d6d6d6; }
.status-cells .first-cell { width: 127px; }
.nav-icons, .view-icons { display: flex; align-items: center; align-self: stretch; border-left: 1px solid #cfcfcf; }
.nav-icons { width: 71px; justify-content: space-around; padding: 0 3px; }
.view-icons { width: 68px; margin-left: -20px; padding-left: 8px; gap: 9px; }
</style>
